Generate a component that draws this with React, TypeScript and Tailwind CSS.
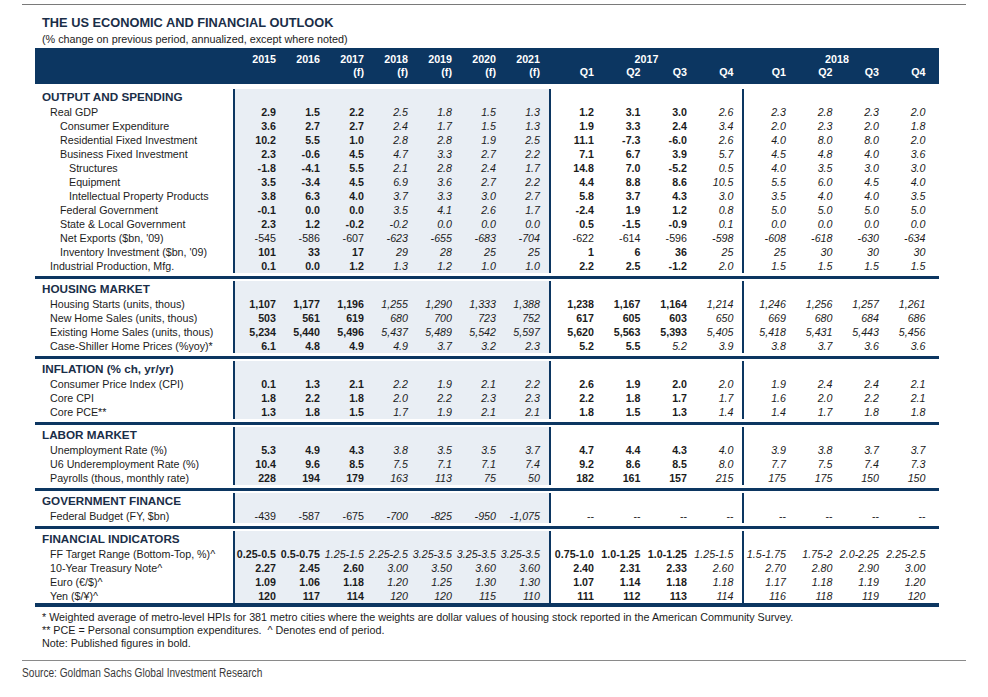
type Row = { label: string; indent: number; v: string[]; s?: string };
type Section = { title: string; rows: Row[] };

const DEF = "bbbiiiibbbiiiii";
const GRID =
  "grid grid-cols-[198px_2px_repeat(7,44px)_6px_2px_repeat(4,46.5px)_5px_2px_repeat(4,46.5px)_9px]";
const NAVY = "bg-[#0c3661]";
const SHADE = "bg-[#e9eef4]";
const IND = ["pl-[7px]", "pl-[15px]", "pl-[25px]", "pl-[34px]"];

const sections: Section[] = [
  {
    title: "OUTPUT AND SPENDING",
    rows: [
      { label: "Real GDP", indent: 1, v: ["2.9", "1.5", "2.2", "2.5", "1.8", "1.5", "1.3", "1.2", "3.1", "3.0", "2.6", "2.3", "2.8", "2.3", "2.0"] },
      { label: "Consumer Expenditure", indent: 2, v: ["3.6", "2.7", "2.7", "2.4", "1.7", "1.5", "1.3", "1.9", "3.3", "2.4", "3.4", "2.0", "2.3", "2.0", "1.8"] },
      { label: "Residential Fixed Investment", indent: 2, v: ["10.2", "5.5", "1.0", "2.8", "2.8", "1.9", "2.5", "11.1", "-7.3", "-6.0", "2.6", "4.0", "8.0", "8.0", "2.0"] },
      { label: "Business Fixed Investment", indent: 2, v: ["2.3", "-0.6", "4.5", "4.7", "3.3", "2.7", "2.2", "7.1", "6.7", "3.9", "5.7", "4.5", "4.8", "4.0", "3.6"] },
      { label: "Structures", indent: 3, v: ["-1.8", "-4.1", "5.5", "2.1", "2.8", "2.4", "1.7", "14.8", "7.0", "-5.2", "0.5", "4.0", "3.5", "3.0", "3.0"] },
      { label: "Equipment", indent: 3, v: ["3.5", "-3.4", "4.5", "6.9", "3.6", "2.7", "2.2", "4.4", "8.8", "8.6", "10.5", "5.5", "6.0", "4.5", "4.0"] },
      { label: "Intellectual Property Products", indent: 3, v: ["3.8", "6.3", "4.0", "3.7", "3.3", "3.0", "2.7", "5.8", "3.7", "4.3", "3.0", "3.5", "4.0", "4.0", "3.5"] },
      { label: "Federal Government", indent: 2, v: ["-0.1", "0.0", "0.0", "3.5", "4.1", "2.6", "1.7", "-2.4", "1.9", "1.2", "0.8", "5.0", "5.0", "5.0", "5.0"] },
      { label: "State & Local Government", indent: 2, v: ["2.3", "1.2", "-0.2", "-0.2", "0.0", "0.0", "0.0", "0.5", "-1.5", "-0.9", "0.1", "0.0", "0.0", "0.0", "0.0"] },
      { label: "Net Exports ($bn, '09)", indent: 2, v: ["-545", "-586", "-607", "-623", "-655", "-683", "-704", "-622", "-614", "-596", "-598", "-608", "-618", "-630", "-634"], s: "rrriiiirrriiiii" },
      { label: "Inventory Investment ($bn, '09)", indent: 2, v: ["101", "33", "17", "29", "28", "25", "25", "1", "6", "36", "25", "25", "30", "30", "30"] },
      { label: "Industrial Production, Mfg.", indent: 1, v: ["0.1", "0.0", "1.2", "1.3", "1.2", "1.0", "1.0", "2.2", "2.5", "-1.2", "2.0", "1.5", "1.5", "1.5", "1.5"] },
    ],
  },
  {
    title: "HOUSING MARKET",
    rows: [
      { label: "Housing Starts (units, thous)", indent: 1, v: ["1,107", "1,177", "1,196", "1,255", "1,290", "1,333", "1,388", "1,238", "1,167", "1,164", "1,214", "1,246", "1,256", "1,257", "1,261"] },
      { label: "New Home Sales (units, thous)", indent: 1, v: ["503", "561", "619", "680", "700", "723", "752", "617", "605", "603", "650", "669", "680", "684", "686"] },
      { label: "Existing Home Sales (units, thous)", indent: 1, v: ["5,234", "5,440", "5,496", "5,437", "5,489", "5,542", "5,597", "5,620", "5,563", "5,393", "5,405", "5,418", "5,431", "5,443", "5,456"] },
      { label: "Case-Shiller Home Prices (%yoy)*", indent: 1, v: ["6.1", "4.8", "4.9", "4.9", "3.7", "3.2", "2.3", "5.2", "5.5", "5.2", "3.9", "3.8", "3.7", "3.6", "3.6"], s: "bbbiiiibbiiiiii" },
    ],
  },
  {
    title: "INFLATION (% ch, yr/yr)",
    rows: [
      { label: "Consumer Price Index (CPI)", indent: 1, v: ["0.1", "1.3", "2.1", "2.2", "1.9", "2.1", "2.2", "2.6", "1.9", "2.0", "2.0", "1.9", "2.4", "2.4", "2.1"] },
      { label: "Core CPI", indent: 1, v: ["1.8", "2.2", "1.8", "2.0", "2.2", "2.3", "2.3", "2.2", "1.8", "1.7", "1.7", "1.6", "2.0", "2.2", "2.1"] },
      { label: "Core PCE**", indent: 1, v: ["1.3", "1.8", "1.5", "1.7", "1.9", "2.1", "2.1", "1.8", "1.5", "1.3", "1.4", "1.4", "1.7", "1.8", "1.8"] },
    ],
  },
  {
    title: "LABOR MARKET",
    rows: [
      { label: "Unemployment Rate (%)", indent: 1, v: ["5.3", "4.9", "4.3", "3.8", "3.5", "3.5", "3.7", "4.7", "4.4", "4.3", "4.0", "3.9", "3.8", "3.7", "3.7"] },
      { label: "U6 Underemployment Rate (%)", indent: 1, v: ["10.4", "9.6", "8.5", "7.5", "7.1", "7.1", "7.4", "9.2", "8.6", "8.5", "8.0", "7.7", "7.5", "7.4", "7.3"] },
      { label: "Payrolls (thous, monthly rate)", indent: 1, v: ["228", "194", "179", "163", "113", "75", "50", "182", "161", "157", "215", "175", "175", "150", "150"] },
    ],
  },
  {
    title: "GOVERNMENT FINANCE",
    rows: [
      { label: "Federal Budget (FY, $bn)", indent: 1, v: ["-439", "-587", "-675", "-700", "-825", "-950", "-1,075", "--", "--", "--", "--", "--", "--", "--", "--"], s: "rrriiiirrrrrrrr" },
    ],
  },
  {
    title: "FINANCIAL INDICATORS",
    rows: [
      { label: "FF Target Range (Bottom-Top, %)^", indent: 1, v: ["0.25-0.5", "0.5-0.75", "1.25-1.5", "2.25-2.5", "3.25-3.5", "3.25-3.5", "3.25-3.5", "0.75-1.0", "1.0-1.25", "1.0-1.25", "1.25-1.5", "1.5-1.75", "1.75-2", "2.0-2.25", "2.25-2.5"], s: "bbiiiiibbbiiiii" },
      { label: "10-Year Treasury Note^", indent: 1, v: ["2.27", "2.45", "2.60", "3.00", "3.50", "3.60", "3.60", "2.40", "2.31", "2.33", "2.60", "2.70", "2.80", "2.90", "3.00"] },
      { label: "Euro (€/$)^", indent: 1, v: ["1.09", "1.06", "1.18", "1.20", "1.25", "1.30", "1.30", "1.07", "1.14", "1.18", "1.18", "1.17", "1.18", "1.19", "1.20"] },
      { label: "Yen ($/¥)^", indent: 1, v: ["120", "117", "114", "120", "120", "115", "110", "111", "112", "113", "114", "116", "118", "119", "120"] },
    ],
  },
];

function weight(c: string) {
  if (c === "b") return "font-bold";
  if (c === "i") return "italic";
  return "";
}

function DataRow({ row }: { row: Row }) {
  const st = row.s ?? DEF;
  const cell = (i: number, pad: string, bg = "") => (
    <div key={i} className={`${pad} ${bg} ${weight(st[i])} whitespace-nowrap text-right`}>
      {row.v[i]}
    </div>
  );
  return (
    <div className={`${GRID} h-[14px] text-[10.7px] leading-[14px] text-[#1c1c1c]`}>
      <div className={`${IND[row.indent]} whitespace-nowrap`}>{row.label}</div>
      <div className={NAVY} />
      {[0, 1, 2, 3, 4, 5, 6].map((i) => cell(i, "pr-[3px]", SHADE))}
      <div className={SHADE} />
      <div className={NAVY} />
      {[7, 8, 9, 10].map((i) => cell(i, "pr-[3.5px]"))}
      <div />
      <div className={NAVY} />
      {[11, 12, 13, 14].map((i) => cell(i, "pr-[4.5px]"))}
      <div />
    </div>
  );
}

function SectionBlock({ section }: { section: Section }) {
  return (
    <div>
      <div className={`${GRID} h-[16px] leading-[16px]`}>
        <div className="pl-[7px] text-[11.7px] font-bold whitespace-nowrap text-[#1a2e48]">
          {section.title}
        </div>
        <div className={NAVY} />
        <div className={`col-span-8 ${SHADE}`} />
        <div className={NAVY} />
        <div className="col-span-5" />
        <div className={NAVY} />
        <div className="col-span-5" />
      </div>
      {section.rows.map((r) => (
        <DataRow key={r.label} row={r} />
      ))}
    </div>
  );
}

function Header() {
  const years = ["2015", "2016", "2017", "2018", "2019", "2020", "2021"];
  return (
    <div className={`h-[36px] ${NAVY} pt-[5px] text-[10.7px] font-bold leading-[13px] text-white`}>
      <div className={GRID}>
        <div />
        <div />
        {years.map((y) => (
          <div key={y} className="pr-[3px] text-right">
            {y}
          </div>
        ))}
        <div />
        <div />
        <div className="col-span-5 text-center">2017</div>
        <div />
        <div className="col-span-4 text-center">2018</div>
        <div />
      </div>
      <div className={GRID}>
        <div />
        <div />
        <div />
        <div />
        {[0, 1, 2, 3, 4].map((i) => (
          <div key={i} className="pr-[3px] text-right">
            (f)
          </div>
        ))}
        <div />
        <div />
        {["Q1", "Q2", "Q3", "Q4"].map((q) => (
          <div key={q} className="pr-[3.5px] text-right">
            {q}
          </div>
        ))}
        <div />
        <div />
        {["Q1", "Q2", "Q3", "Q4"].map((q) => (
          <div key={"b" + q} className="pr-[4.5px] text-right">
            {q}
          </div>
        ))}
        <div />
      </div>
    </div>
  );
}

function Separator() {
  return (
    <div className="py-[2px] pt-[3px]">
      <div className={`h-[3px] ${NAVY}`} />
    </div>
  );
}

export default function App() {
  return (
    <div className="relative h-[697px] w-[988px] overflow-hidden bg-white pt-[4px] font-['Liberation_Sans',Arial,sans-serif] text-[#1c1c1c]">
      <div className="mx-[22px] h-px bg-[#7a7a7a]" />

      <div className="mt-[10px] pl-[42px] text-[12.8px] font-bold leading-[16px] text-[#1a2e48]">
        THE US ECONOMIC AND FINANCIAL OUTLOOK
      </div>
      <div className="mt-px pl-[42px] text-[10.8px] leading-[14px] text-[#1c1c1c]">
        (% change on previous period, annualized, except where noted)
      </div>

      <div className="ml-[35px] mt-[2px] w-[904px]">
        <Header />
        <div className="h-[5px]" />
        {sections.map((s, i) => (
          <div key={s.title}>
            <SectionBlock section={s} />
            {i < sections.length - 1 ? <Separator /> : <div className={`h-[4px] ${NAVY}`} />}
          </div>
        ))}
      </div>

      <div className="mt-[4px] pl-[42px] text-[10.75px] leading-[13px] text-[#1c1c1c]">
        <p>
          * Weighted average of metro-level HPIs for 381 metro cities where the weights are dollar values of housing
          stock reported in the American Community Survey.
        </p>
        <p>** PCE = Personal consumption expenditures.&nbsp; ^ Denotes end of period.</p>
        <p>Note: Published figures in bold.</p>
      </div>

      <div className="mx-[22px] mt-[10px] h-px bg-[#8a8a8a]" />
      <div className="mt-[5px] pl-[22px] text-[12.5px] leading-[14px] text-[#3a3a3a]">
        <span className="inline-block origin-left scale-x-[0.81] whitespace-nowrap">
          Source: Goldman Sachs Global Investment Research
        </span>
      </div>
    </div>
  );
}
